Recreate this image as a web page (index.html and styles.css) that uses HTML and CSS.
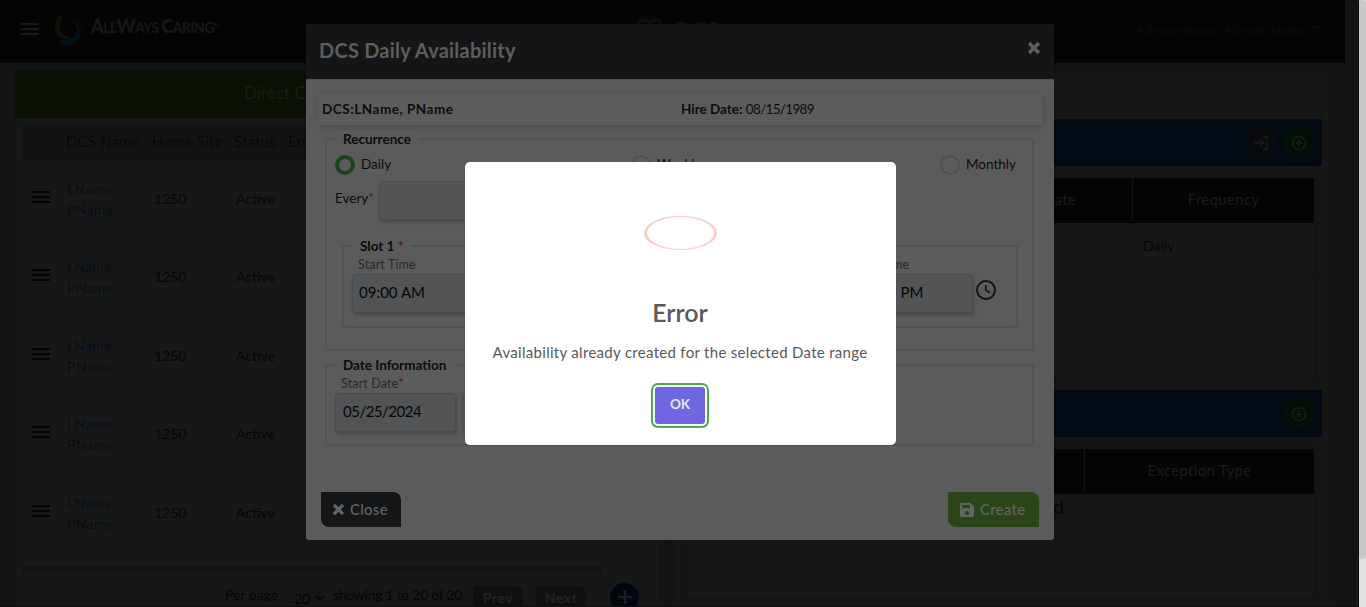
FILE: index.html
```html
<!DOCTYPE html>
<html lang="en">
<head>
<meta charset="utf-8">
<title>DCS Daily Availability</title>
<link rel="stylesheet" href="styles.css">
</head>
<body>
<svg class="defs" width="0" height="0">
  <symbol id="menu" viewBox="0 0 18 12"><path d="M0 1H18M0 6H18M0 11H18" stroke="currentColor" stroke-width="2" fill="none"/></symbol>
  <symbol id="plus-circle" viewBox="0 0 16 16"><circle cx="8" cy="8" r="6.4" fill="none" stroke="currentColor" stroke-width="1.4"/><path d="M8 4.6V11.4M4.6 8H11.4" stroke="currentColor" stroke-width="1.4"/></symbol>
  <symbol id="cross" viewBox="0 0 12 12"><path d="M1.8 1.8L10.2 10.2M10.2 1.8L1.8 10.2" stroke="currentColor" stroke-width="3" fill="none"/></symbol>
</svg>
<div class="app">
  <header class="topbar">
    <svg class="burger"><use href="#menu"/></svg>
    <div class="brand">
      <svg class="swirl" viewBox="0 0 34 34">
        <path d="M7 1C3 3 0 9 1 15C2 22 8 27 19 24C12 23 6 19 6 12C6 8 9 4 9 2C9 1 8 0 7 1Z" fill="#0b1207"/>
        <path d="M12 5C19 0 30 6 33 19C29 12 22 6 12 5Z" fill="#05070c"/>
        <path d="M20 7C28 10 29 20 24 26C19 31 11 33 7 31C5 29 6 26 8 26C19 27 27 20 20 7Z" fill="#031018"/>
      </svg>
      <div class="brand-text"><span class="brand-name"><b>A</b>LL<b>W</b>AYS <b>C</b>ARING<sup>®</sup></span><span class="brand-sub">Rest Care</span></div>
    </div>
    <div class="app-title"><svg class="title-logo" viewBox="0 0 26 20"><path d="M1 8C1 0 10 1 13 5C16 1 25 0 25 8L13 19Z" fill="none" stroke="#0b1307" stroke-width="3"/></svg><span>DCS</span></div>
    <div class="user"><span>Administrator, Administrator</span><svg width="10" height="8" viewBox="0 0 10 8"><path d="M1 1H9L5 7Z" fill="none" stroke="currentColor" stroke-width="1.4"/></svg></div>
  </header>
  <main class="content">
    <section class="staff">
      <h2 class="staff-title">Direct Care Staff</h2>
      <div class="staff-list">
        <div class="row head"><span></span><span>DCS Name</span><span>Home Site</span><span>Status</span><span>Email</span></div>
        <div class="row"><svg class="grip"><use href="#menu"/></svg><a>LName,<br>PName</a><span class="site">1250</span><span class="status">Active</span></div>
        <div class="row"><svg class="grip"><use href="#menu"/></svg><a>LName,<br>PName</a><span class="site">1250</span><span class="status">Active</span></div>
        <div class="row"><svg class="grip"><use href="#menu"/></svg><a>LName,<br>PName</a><span class="site">1250</span><span class="status">Active</span></div>
        <div class="row"><svg class="grip"><use href="#menu"/></svg><a>LName,<br>PName</a><span class="site">1250</span><span class="status">Active</span></div>
        <div class="row"><svg class="grip"><use href="#menu"/></svg><a>LName,<br>PName</a><span class="site">1250</span><span class="status">Active</span></div>
      </div>
      <div class="hscroll"></div>
      <div class="pager">
        <span class="per">Per page</span>
        <span class="select">20<svg width="10" height="7" viewBox="0 0 10 7"><path d="M1 1L5 5L9 1" fill="none" stroke="currentColor" stroke-width="2"/></svg></span>
        <span class="showing">showing 1 to 20 of 20</span>
        <span class="page-btn">Prev</span><span class="page-btn next">Next</span>
        <span class="add"><svg width="16" height="16" viewBox="0 0 16 16"><path d="M8 1V15M1 8H15" stroke="currentColor" stroke-width="2.4"/></svg></span>
      </div>
    </section>
    <section class="details">
      <div class="summary"></div>
      <div class="bar">
        <span class="round dark"><svg width="16" height="16" viewBox="0 0 16 16"><path d="M1 8H10M7 4.5L10.5 8L7 11.5M10 1.7H14V14.3H10" fill="none" stroke="currentColor" stroke-width="1.5"/></svg></span>
        <span class="round"><svg width="16" height="16"><use href="#plus-circle"/></svg></span>
      </div>
      <div class="grid">
        <div class="grid-head"><span class="c1">End Date</span><span class="c2">Frequency</span></div>
        <div class="grid-row"><span class="c1"></span><span class="c2">Daily</span></div>
      </div>
      <div class="bar"><span class="round"><svg width="16" height="16"><use href="#plus-circle"/></svg></span></div>
      <div class="grid second">
        <div class="grid-head"><span class="c1"></span><span class="c2">Exception Type</span></div>
        <div class="empty">No Record Found</div>
      </div>
    </section>
  </main>
  <div class="vscroll"><div class="thumb"></div></div>
  <div class="bottom-edge"></div>

  <div class="modal">
    <div class="modal-head"><h1>DCS Daily Availability</h1><svg class="close-x"><use href="#cross"/></svg></div>
    <div class="modal-body">
      <div class="person"><b class="p-name">DCS:LName, PName</b><span class="hire"><b>Hire Date:</b> <span class="hire-value">08/15/1989</span></span></div>
      <div class="box recurrence">
        <span class="legend">Recurrence</span>
        <div class="radios">
          <label><i class="radio on"></i><span>Daily</span></label>
          <label><i class="radio"></i><span>Weekly</span></label>
          <label><i class="radio"></i><span>Monthly</span></label>
        </div>
        <div class="every"><span>Every<em>*</em></span><div class="input"></div></div>
        <div class="box slot">
          <span class="legend">Slot 1 <em>*</em></span>
          <div class="field start"><span class="lbl">Start Time</span><div class="input">09:00 AM</div></div>
          <div class="field end"><span class="lbl">End Time</span><div class="input">05:00 PM</div></div>
          <svg class="clock" viewBox="0 0 20 20"><circle cx="10" cy="10" r="9" fill="none" stroke="currentColor" stroke-width="1.9"/><path d="M9.8 5V10.3L14 12.7" fill="none" stroke="currentColor" stroke-width="1.5"/></svg>
        </div>
      </div>
      <div class="box dates">
        <span class="legend">Date Information</span>
        <div class="field"><span class="lbl">Start Date<em>*</em></span><div class="input">05/25/2024</div></div>
        <div class="field"><span class="lbl">End Date</span><div class="input"></div></div>
      </div>
      <div class="actions">
        <div class="btn close"><svg width="13" height="13"><use href="#cross"/></svg><span>Close</span></div>
        <div class="btn create"><svg width="14" height="14" viewBox="0 0 14 14"><path fill-rule="evenodd" d="M1.5 0H10.5L14 3.5V12.5Q14 14 12.5 14H1.5Q0 14 0 12.5V1.5Q0 0 1.5 0ZM2 2V5.3H10V2ZM7 8A2 2 0 1 0 7 12A2 2 0 1 0 7 8Z" fill="currentColor"/></svg><span>Create</span></div>
      </div>
    </div>
  </div>

  <div class="alert">
    <div class="alert-icon"></div>
    <h2>Error</h2>
    <p>Availability already created for the selected Date range</p>
    <div class="ok">OK</div>
  </div>
</div>
</body>
</html>
```
FILE: styles.css
```css
* { box-sizing: border-box; }
body { margin: 0; background: #141414; font-family: Lato, "Open Sans", sans-serif; }
h1, h2, p { margin: 0; }
.defs { position: absolute; }
.app { position: relative; width: 1366px; height: 607px; overflow: hidden; }

.topbar { display: flex; width: 1345px; height: 63px; background: #040404; position: relative; }
.burger { width: 19px; height: 12px; margin: 23px 0 0 20px; color: #191919; }
.brand { display: flex; margin: 14px 0 0 15px; }
.swirl { width: 34px; height: 34px; }
.brand-text { display: flex; flex-direction: column; margin-left: 3px; color: #171717; }
.brand-name { font-size: 14.5px; font-weight: 700; line-height: 22px; margin-top: 1px; letter-spacing: -0.75px; }
.brand-name b { font-size: 18px; }
.brand-name sup { font-size: 6px; line-height: 0; vertical-align: 6px; }
.brand-sub { font-size: 8px; font-style: italic; line-height: 8px; color: #05060b; }
.app-title { position: absolute; left: 636px; top: 18px; display: flex; gap: 12px; color: #171717; font-weight: 900; font-size: 22px; line-height: 26px; letter-spacing: 0.6px; }
.title-logo { width: 27px; height: 20px; }
.user { margin: 20px 25px 0 auto; display: flex; align-items: center; gap: 5px; height: 20px; font-size: 13px; font-weight: 500; color: #080b17; letter-spacing: 0.23px; }

.content { display: flex; gap: 17px; padding: 7px 0 0 15px; }
.staff { width: 643px; height: 537px; background: #161817; color: #050505; }
.staff-title { height: 48px; padding-left: 229px; background: #0a1005; color: #1a1d18; font-size: 16.5px; font-weight: 400; line-height: 47px; letter-spacing: 0.3px; }
.staff-list { margin: 6px 7px 0; }
.row { display: grid; grid-template-columns: 45px 87px 80px 54px 1fr; height: 78.4px; border-bottom: 1px solid #131514; font-size: 14px; padding-top: 17px; }
.row.head { height: 37px; grid-template-columns: 44px 86px 82px 54px 1fr; padding: 0; line-height: 35px; font-size: 15px; color: #080808; background: #131313; letter-spacing: 0.2px; }
.grip { width: 18px; height: 12px; margin: 13px 0 0 10px; color: #030303; }
.row a { line-height: 21px; color: #090b18; letter-spacing: 0.3px; }
.site, .status { line-height: 42px; }
.status { padding-left: 2px; }
.hscroll { width: 580px; height: 7px; margin: 13px 0 0 7px; border-radius: 4px; background: #101111; }
.pager { display: flex; padding: 13px 0 0 210px; font-size: 14px; }
.per { width: 58px; line-height: 17px; flex: none; }
.select { display: flex; flex: none; gap: 5px; align-items: center; width: 43px; height: 30px; border-radius: 5px; padding: 0 0 5px 11px; background: #161615; }
.showing { width: 147px; flex: none; padding-left: 7px; line-height: 17px; white-space: nowrap; letter-spacing: -0.28px; }
.page-btn { width: 50px; flex: none; height: 30px; border-radius: 0 8px 0 8px; background: #0f0f0f; color: #222; font-weight: 700; text-align: center; line-height: 24px; letter-spacing: .5px; }
.page-btn.next { margin-left: 13px; }
.add { display: flex; flex: none; align-items: center; justify-content: center; width: 29px; height: 29px; margin: -3px 0 0 24px; border-radius: 50%; background: #02060f; color: #1b1d20; }

.details { width: 655px; height: 537px; padding: 7px 8px 0 5px; background: #161616; }
.summary { height: 38px; border: 1px solid #131313; background: #171717; }
.bar { display: flex; justify-content: flex-end; align-items: center; gap: 7px; height: 47px; margin-top: 4px; padding-right: 8px; background: #030913; }
.round { display: flex; width: 31px; height: 31px; border-radius: 50%; align-items: center; justify-content: center; background: #040e05; color: #1a1f1a; }
.round.dark { background: #080a0d; color: #1b1b1b; }
.grid { height: 201px; margin: 12px 8px 0; background: #171717; box-shadow: 0 0 4px #121212; }
.grid + .bar { margin-top: 11px; }
.grid-head, .grid-row { display: grid; grid-template-columns: 444px 1fr; }
.second .grid-head { grid-template-columns: 396px 1fr; }
.grid-head { height: 45px; background: #040404; color: #191919; font-size: 15px; font-weight: 500; line-height: 42px; text-align: center; letter-spacing: 0.25px; }
.grid-head .c1 { text-align: right; padding-right: 56px; }
.grid-head .c2 { border-left: 1px solid #151515; height: 43px; }
.grid-row { height: 50px; border-bottom: 1px solid #141414; color: #060606; font-size: 14px; line-height: 46px; }
.grid-row .c2 { padding-left: 10px; border-left: 1px solid #141414; }
.grid.second { height: 149px; }
.empty { color: #060606; font-size: 19px; line-height: 26px; width: 376px; text-align: right; }
.vscroll { position: absolute; right: 0; top: 0; width: 7px; height: 607px; background: #dfe0e1; }
.thumb { height: 559px; background: #c8c8c8; border-radius: 3px; }
.bottom-edge { position: absolute; left: 0; top: 606px; width: 1359px; height: 1px; background: #140c0e; }

.modal { position: absolute; left: 306px; top: 24px; width: 748px; height: 516px; border-radius: 3px; overflow: hidden; background: #5b5b5b; color: #0b0c0d; box-shadow: 0 0 2px #080808; }
.modal-head { display: flex; justify-content: space-between; height: 55px; padding: 0 13px; background: #131517; color: #5d5d5d; }
.modal-head h1 { font-size: 20px; line-height: 53px; font-weight: 700; letter-spacing: 0.22px; }
.close-x { width: 14px; height: 14px; margin-top: 17px; }
.modal-body { padding: 15px 12px 0 13px; border-top: 1px solid #505050; height: 461px; }
.person { display: flex; height: 31px; margin-top: -1px; padding-left: 3px; line-height: 31px; font-size: 13.5px; box-shadow: 1px 1px 6px 1px #505050; background: #5c5c5c; }
.person .p-name { width: 359px; letter-spacing: 0.53px; }
.hire b { letter-spacing: -0.02px; }
.hire-value { letter-spacing: -0.68px; }
.box { position: relative; border: 2px solid #525253; border-radius: 3px; }
.legend { position: absolute; left: 8px; top: -10px; padding: 0 8px; line-height: 18px; background: #5b5b5b; font-size: 13.5px; font-weight: 700; white-space: nowrap; }
em { font-style: normal; color: #4e161a; }
.recurrence { height: 213px; margin: 13px 8px 0 6px; padding: 14px 14px 0 8px; }
.radios { display: flex; font-size: 13.5px; height: 22px; }
.radios label { display: flex; align-items: center; gap: 6px; width: 296px; height: 22px; line-height: 18px; }
.radios label span { padding-bottom: 3px; }
.radios label:nth-child(2) { width: 309px; }
.radios label:nth-child(3) { width: auto; }
.radio { width: 20px; height: 20px; border: 2px solid #4c5053; border-radius: 50%; }
.radio.on { border: 4px solid #1b431d; }
.every { display: flex; margin-top: 5px; font-size: 13.5px; line-height: 35px; }
.every > span { width: 44px; }
.input { height: 39px; border: 1px solid #484d51; border-radius: 3px; background: #525456; box-shadow: 1px 2px 3px #474747; color: #050505; font-size: 15px; line-height: 35px; padding-left: 6px; white-space: nowrap; }
.every .input { width: 240px; flex: none; }
.slot { display: flex; height: 83px; margin: 25px 0 0 7px; padding: 8px 0 0 8px; }
.field .lbl { display: block; height: 19px; padding: 2px 0 0 6px; font-size: 12.5px; line-height: 15px; color: #27292b; white-space: nowrap; letter-spacing: 0.15px; }
.slot .input { width: 240px; }
.slot .end { margin-left: 138px; }
.slot .end .input { width: 243px; padding-left: 127px; }
.slot .end .lbl { padding-left: 127px; }
.clock { width: 20px; height: 20px; margin: 25px 0 0 3px; color: #101010; }
.dates { display: flex; gap: 6px; height: 82px; margin: 13px 8px 0 6px; padding: 8px 8px 8px; }
.dates .input { width: 121px; padding-left: 7px; letter-spacing: -0.5px; }
.actions { display: flex; justify-content: space-between; margin-top: 46px; padding: 0 3px 0 2px; }
.btn { display: flex; align-items: center; gap: 5px; height: 35px; padding-left: 11px; font-size: 15px; font-weight: 500; color: #626465; letter-spacing: 0.25px; }
.btn span { padding-bottom: 2px; }
.btn.close { width: 80px; background: #141618; border-radius: 0 8px 0 8px; }
.btn.create { width: 91px; gap: 6px; padding-left: 12px; background: #2b4518; border-radius: 0 8px 0 8px; }

.alert { position: absolute; left: 464.5px; top: 162px; width: 431px; height: 283px; padding-top: 54px; display: flex; flex-direction: column; align-items: center; background: #fff; border-radius: 5px; color: #595959; }
.alert-icon { width: 73px; height: 34px; flex: none; border: solid #facbcb; border-width: 1.7px 3.5px; border-radius: 50%; }
.alert h2 { margin-top: 46px; font-size: 25px; line-height: 32px; font-weight: 600; }
.alert p { margin-top: 13px; font-size: 15px; line-height: 22px; white-space: nowrap; letter-spacing: 0.3px; }
.ok { width: 50px; height: 37px; margin-top: 24px; border-radius: 3px; background: #7066e0; box-shadow: 0 0 0 2px #fff, 0 0 0 4px #4cac50; color: #e9e7fb; font-size: 13.5px; font-weight: 700; line-height: 35px; text-align: center; }
```
